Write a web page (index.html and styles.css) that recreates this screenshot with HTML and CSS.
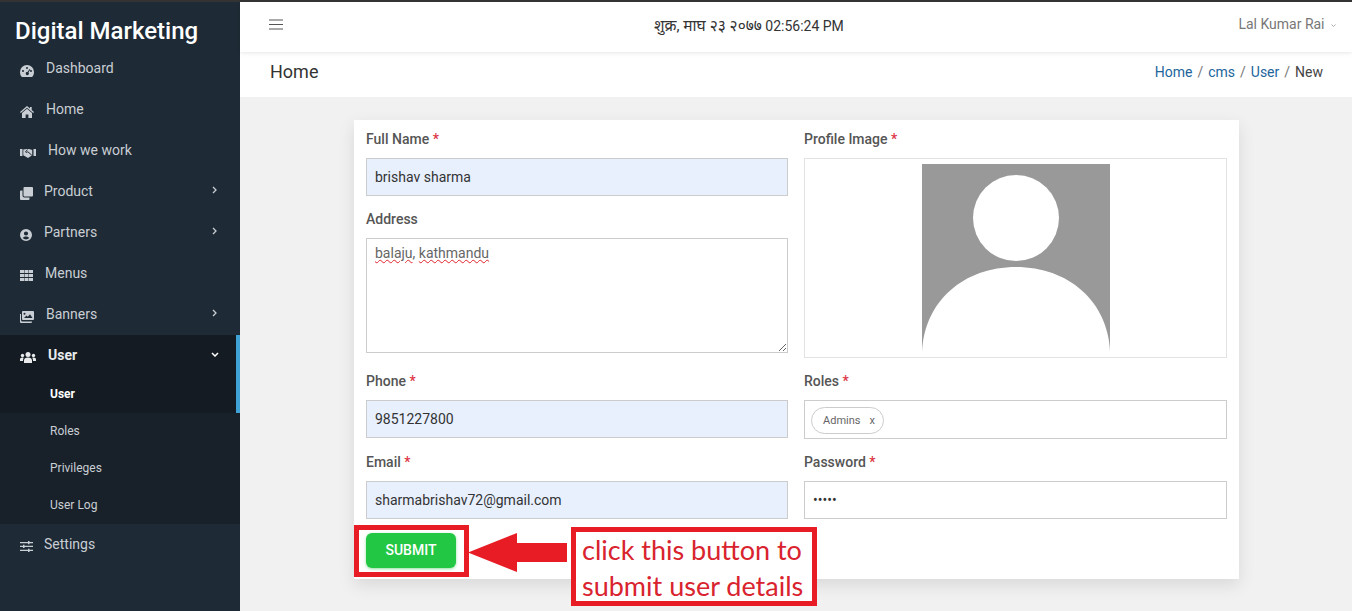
FILE: index.html
```html
<!DOCTYPE html>
<html lang="en">
<head>
  <meta charset="UTF-8" />
  <title>Digital Marketing</title>
  <link rel="stylesheet" href="styles.css">
</head>
<body>

  <aside class="sidebar">
    <div class="brand">Digital Marketing</div>
    <ul class="menu">
      <li class="item">
        <svg class="ico" width="14" height="12" viewBox="0 0 14 12"><path fill="currentColor" fill-rule="evenodd" d="M7 0a7 7 0 0 1 7 7c0 1.700-.5 3.300-1.400 4.600-.2.300-.5.400-.8.400H2.200c-.3 0-.6-.1-.8-.4A8 8 0 0 1 0 7a7 7 0 0 1 7-7zM7 2a1 1 0 1 0 0 2 1 1 0 0 0 0-2zM3 5a1 1 0 1 0 0 2 1 1 0 0 0 0-2zM11 5a1 1 0 1 0 0 2 1 1 0 0 0 0-2zM9.600 4 7.500 7.100a1.500 1.500 0 1 0 .9.500l2-3.100z"/></svg>
        <span>Dashboard</span>
      </li>
      <li class="item">
        <svg class="ico" width="14" height="12" viewBox="0 0 14 12"><path fill="currentColor" d="M7 0 0 6l.8.900L7 1.700l6.200 5.200L14 6l-2.300-2V1H10v1.500zM7 2.800 2 7v5h3.600V8.500h2.800V12H12V7z"/></svg>
        <span>Home</span>
      </li>
      <li class="item">
        <svg class="ico" width="16" height="10" viewBox="0 0 16 10"><path fill="currentColor" d="M0 1h2.500v7H0zM13.500 1H16v7h-2.500zM3.300 1.500 7 1h2l3.200 1v5.200L8 10 3.300 7.200z"/><path fill="none" stroke="#1e2a35" d="M7.500 1.500 5.500 4c.6.700 1.500.6 2.300-.3l4 3.500"/></svg>
        <span>How we work</span>
      </li>
      <li class="item">
        <svg class="ico" width="13" height="13" viewBox="0 0 13 13"><path fill="currentColor" d="M4.500 0H12a1 1 0 0 1 1 1v7.500a1 1 0 0 1-1 1H4.500a1 1 0 0 1-1-1V1a1 1 0 0 1 1-1zM1 3.500h1.500v5a2 2 0 0 0 2 2h5V12a1 1 0 0 1-1 1H1a1 1 0 0 1-1-1V4.500a1 1 0 0 1 1-1z"/></svg>
        <span class="tight">Product</span>
        <svg class="chev" width="5" height="8" viewBox="0 0 5 8"><path fill="none" stroke="currentColor" stroke-width="1.300" d="m1 1 3 3-3 3"/></svg>
      </li>
      <li class="item">
        <svg class="ico" width="12" height="12" viewBox="0 0 12 12"><path fill="currentColor" fill-rule="evenodd" d="M6 0a6 6 0 1 1 0 12A6 6 0 0 1 6 0zm0 2.400a2.100 2.100 0 1 0 0 4.200 2.100 2.100 0 0 0 0-4.200zM6 7.400c-1.500 0-2.800.6-3.300 1.700a4.500 4.500 0 0 0 6.600 0C8.800 8 7.500 7.400 6 7.400z"/></svg>
        <span>Partners</span>
        <svg class="chev" width="5" height="8" viewBox="0 0 5 8"><path fill="none" stroke="currentColor" stroke-width="1.300" d="m1 1 3 3-3 3"/></svg>
      </li>
      <li class="item">
        <svg class="ico" width="13" height="11" viewBox="0 0 13 11"><path fill="currentColor" d="M0 0h4v3H0zM4.500 0h4v3h-4zM9 0h4v3H9zM0 4h4v3H0zM4.500 4h4v3h-4zM9 4h4v3H9zM0 8h4v3H0zM4.500 8h4v3h-4zM9 8h4v3H9z"/></svg>
        <span>Menus</span>
      </li>
      <li class="item">
        <svg class="ico" width="14" height="12" viewBox="0 0 14 12"><path fill="currentColor" fill-rule="evenodd" d="M3 0h10a1 1 0 0 1 1 1v7a1 1 0 0 1-1 1H3a1 1 0 0 1-1-1V1a1 1 0 0 1 1-1zm1 7h8.500L10 3.200 7.800 5.800 6.500 4.600zM4.500 1.800a1 1 0 1 0 0 2 1 1 0 0 0 0-2zM0 3h1v6a1.500 1.500 0 0 0 1.500 1.500H12V11a1 1 0 0 1-1 1H1a1 1 0 0 1-1-1z"/></svg>
        <span>Banners</span>
        <svg class="chev" width="5" height="8" viewBox="0 0 5 8"><path fill="none" stroke="currentColor" stroke-width="1.300" d="m1 1 3 3-3 3"/></svg>
      </li>
      <li class="group">
        <div class="item current">
          <svg class="ico" width="16" height="11" viewBox="0 0 16 11"><circle fill="currentColor" cx="8" cy="2.500" r="2.500"/><circle fill="currentColor" cx="2.500" cy="3.500" r="1.700"/><circle fill="currentColor" cx="13.500" cy="3.500" r="1.700"/><path fill="currentColor" d="M4 11V8.500C4 6.800 5.500 5.500 8 5.500s4 1.300 4 3V11zM0 9V7.500C0 6.300 1 5.600 2.500 5.600c.5 0 .9.100 1.200.3C3.200 6.500 3 7.200 3 8v1zM16 9V7.500c0-1.200-1-1.900-2.500-1.900-.5 0-.9.100-1.200.3.500.6.700 1.300.7 2.100v1z"/></svg>
          <span>User</span>
          <svg class="chev down" width="8" height="5" viewBox="0 0 8 5"><path fill="none" stroke="currentColor" stroke-width="1.500" d="m1 1 3 3 3-3"/></svg>
        </div>
        <ul class="submenu">
          <li class="sub current">User</li>
          <li class="sub">Roles</li>
          <li class="sub">Privileges</li>
          <li class="sub">User Log</li>
        </ul>
      </li>
      <li class="item">
        <svg class="ico" width="13" height="11" viewBox="0 0 13 11"><path fill="currentColor" d="M0 1h13v1.300H0zM0 4.800h13v1.300H0zM0 8.700h13V10H0zM8 0h1.500v3.300H8zM3 3.800h1.500v3.300H3zM8 7.700h1.500V11H8z"/></svg>
        <span class="tight">Settings</span>
      </li>
    </ul>
  </aside>

  <div class="content">
    <header class="topbar">
      <svg class="burger" width="14" height="11" viewBox="0 0 14 11"><path stroke="#555" d="M0 1h14M0 5.500h14M0 10h14"/></svg>
      <div class="clock"><span class="bs">शुक्र, माघ २३ २०७७</span> 02:56:24 PM</div>
      <div class="account">Lal Kumar Rai <svg class="caret" width="5" height="3" viewBox="0 0 5 3"><path fill="none" stroke="#aaa" d="m.5.500 2 2 2-2"/></svg></div>
    </header>

    <div class="pagehead">
      <h1>Home</h1>
      <ol class="crumbs">
        <li><a href="#">Home</a></li>
        <li><a href="#">cms</a></li>
        <li><a href="#">User</a></li>
        <li>New</li>
      </ol>
    </div>

    <main class="main">
      <form class="card">
        <div class="fields">
          <div class="field">
            <label>Full Name <b>*</b></label>
            <input class="filled" type="text" value="brishav sharma" />
          </div>
          <div class="field profile">
            <label>Profile Image <b>*</b></label>
            <div class="imagebox">
              <svg width="188" height="188" viewBox="0 0 188 188"><rect width="188" height="188" fill="#999"/><circle cx="94" cy="54" r="43" fill="#fff"/><path fill="#fff" d="M0 188C2 137 42 103 94 103s92 34 94 85z"/></svg>
            </div>
          </div>
          <div class="field">
            <label>Address</label>
            <div class="textarea" contenteditable="true" spellcheck="false"><span class="typo">balaju</span>, <span class="typo">kathmandu</span></div>
          </div>
          <div class="field">
            <label>Phone <b>*</b></label>
            <input class="filled" type="text" value="9851227800" />
          </div>
          <div class="field">
            <label>Roles <b>*</b></label>
            <div class="tags"><span class="chip">Admins <i>x</i></span></div>
          </div>
          <div class="field">
            <label>Email <b>*</b></label>
            <input class="filled" type="text" value="sharmabrishav72@gmail.com" />
          </div>
          <div class="field">
            <label>Password <b>*</b></label>
            <input type="password" value="12345" />
          </div>
        </div>
        <button class="submit" type="button">SUBMIT</button>

        <!-- annotation drawn over the screenshot -->
        <div class="mark"></div>
        <svg class="arrow" width="99" height="39" viewBox="0 0 99 39"><path fill="#e81c25" d="M0 19.500 49 0v10h50v19H49v10z"/></svg>
        <div class="note">click this button to<br>submit user details</div>
      </form>
    </main>
  </div>

</body>
</html>
```

FILE: styles.css
```css
* {
  box-sizing: border-box;
}

html,
body {
  height: 100%;
}

body {
  margin: 0;
  display: flex;
  overflow: hidden;
  border-top: 2px solid #333;
  font-family: Roboto, "Noto Sans", sans-serif;
  font-size: 14px;
  color: #444;
  background-color: #f1f1f1;
}

ul,
ol {
  list-style: none;
  margin: 0;
  padding: 0;
}

/* sidebar */
.sidebar {
  width: 240px;
  flex: none;
  background-color: #1e2a35;
  color: #c9ced4;
}

.brand {
  height: 46px;
  padding: 14px 0 0 15px;
  font-size: 24px;
  line-height: 30px;
  font-weight: 500;
  color: #fff;
  white-space: nowrap;
}

.item {
  display: flex;
  align-items: center;
  height: 41px;
  padding: 0 23px 2px 19px;
  font-size: 14px;
}

.ico {
  flex: none;
  margin: 6px 12px 0 1px;
}

.tight {
  margin-left: -1px;
}

.chev {
  margin: -1px 0 0 auto;
}

.chev.down {
  margin-right: -2px;
  color: #fff;
}

.group {
  background-color: #18212a;
}

.item.current {
  height: 41px;
  background-color: #141b22;
  border-right: 4px solid #3ea3d4;
  padding-right: 19px;
  font-weight: 700;
  color: #e8eaec;
}

.sub {
  display: flex;
  align-items: center;
  height: 37px;
  padding: 0 0 2px 50px;
  font-size: 12px;
}

.sub.current {
  background-color: #141b22;
  border-right: 4px solid #3ea3d4;
  font-weight: 700;
  color: #fff;
}

/* top */
.content {
  flex: 1;
  display: flex;
  flex-direction: column;
  min-width: 0;
}

.topbar {
  display: flex;
  align-items: center;
  height: 50px;
  padding: 0 15px 0 29px;
  background-color: #fff;
  box-shadow: 0 1px 4px rgba(0, 0, 0, 0.1);
  position: relative;
}

.burger {
  margin-top: -5px;
}

.clock {
  margin: -4px 0 0 371px;
  color: #333;
}

.bs {
  font-size: 15.5px;
}

.account {
  margin: -6px 1px 0 auto;
  color: #777;
}

.caret {
  margin-left: 3px;
  vertical-align: middle;
}

.pagehead {
  display: flex;
  align-items: center;
  justify-content: space-between;
  height: 45px;
  padding: 0 29px 6px 30px;
  background-color: #fff;
}

.pagehead h1 {
  margin: 0;
  font-size: 18px;
  font-weight: 400;
  color: #333;
}

.crumbs {
  display: flex;
}

.crumbs li + li::before {
  content: "/";
  padding: 0 5px;
  color: #777;
}

.crumbs a {
  color: #22659b;
  text-decoration: none;
}

/* form */
.main {
  flex: 1;
  padding-top: 23px;
}

.card {
  position: relative;
  width: 885px;
  margin: 0 0 0 114px;
  padding: 9px 12px 11px;
  background-color: #fff;
  box-shadow: 0 6px 16px rgba(0, 0, 0, 0.1);
}

.fields {
  display: grid;
  grid-template-columns: 422px 423px;
  grid-template-rows: auto 1fr auto auto;
  gap: 13px 16px;
}

.profile {
  grid-row: span 2;
}

.field label {
  display: block;
  height: 21px;
  margin-bottom: 8px;
  line-height: 21px;
  font-weight: 500;
  color: #555;
}

.field b {
  font-weight: 500;
  color: #dc3545;
}

.field input {
  display: block;
  width: 100%;
  height: 38px;
  padding: 0 8px 1px;
  border: 1px solid #ccc;
  outline: none;
  font-family: inherit;
  font-size: 14px;
  color: #333;
  background-color: #fff;
}

.field input.filled {
  background-color: #e8f0fe;
}

.textarea {
  height: 115px;
  padding: 6px 8px;
  border: 1px solid #ccc;
  overflow: auto;
  resize: both;
  outline: none;
  color: #666;
}

.typo {
  text-decoration: underline wavy #e0242c 1px;
}

.imagebox {
  display: flex;
  justify-content: center;
  height: 200px;
  padding-top: 5px;
  border: 1px solid #e2e2e2;
}

.tags {
  height: 39px;
  padding: 6px;
  border: 1px solid #ccc;
}

.chip {
  display: inline-flex;
  align-items: center;
  height: 27px;
  padding: 0 8px 0 11px;
  border: 1px solid #ccc;
  border-radius: 14px;
  font-size: 11px;
  color: #666;
}

.chip i {
  margin-left: 9px;
  font-style: normal;
}

.submit {
  display: block;
  width: 90px;
  height: 35px;
  margin-top: 14px;
  padding: 0 0 2px;
  border: none;
  border-radius: 6px;
  background-color: #22c744;
  box-shadow: 0 1px 3px rgba(34, 199, 68, 0.5);
  font-family: inherit;
  font-size: 14px;
  font-weight: 500;
  color: #fff;
}

/* annotation */
.mark {
  position: absolute;
  left: 0;
  top: 405px;
  width: 115px;
  height: 52px;
  border: 5px solid #e81c25;
}

.arrow {
  position: absolute;
  left: 114px;
  top: 413px;
}

.note {
  position: absolute;
  left: 217px;
  top: 407px;
  width: 246px;
  height: 79px;
  padding: 0 0 0 6px;
  border: 5px solid #e81c25;
  background-color: #fff;
  font-family: Lato, "Open Sans", sans-serif;
  font-size: 27px;
  line-height: 36px;
  color: #d9232e;
  white-space: nowrap;
}
```
